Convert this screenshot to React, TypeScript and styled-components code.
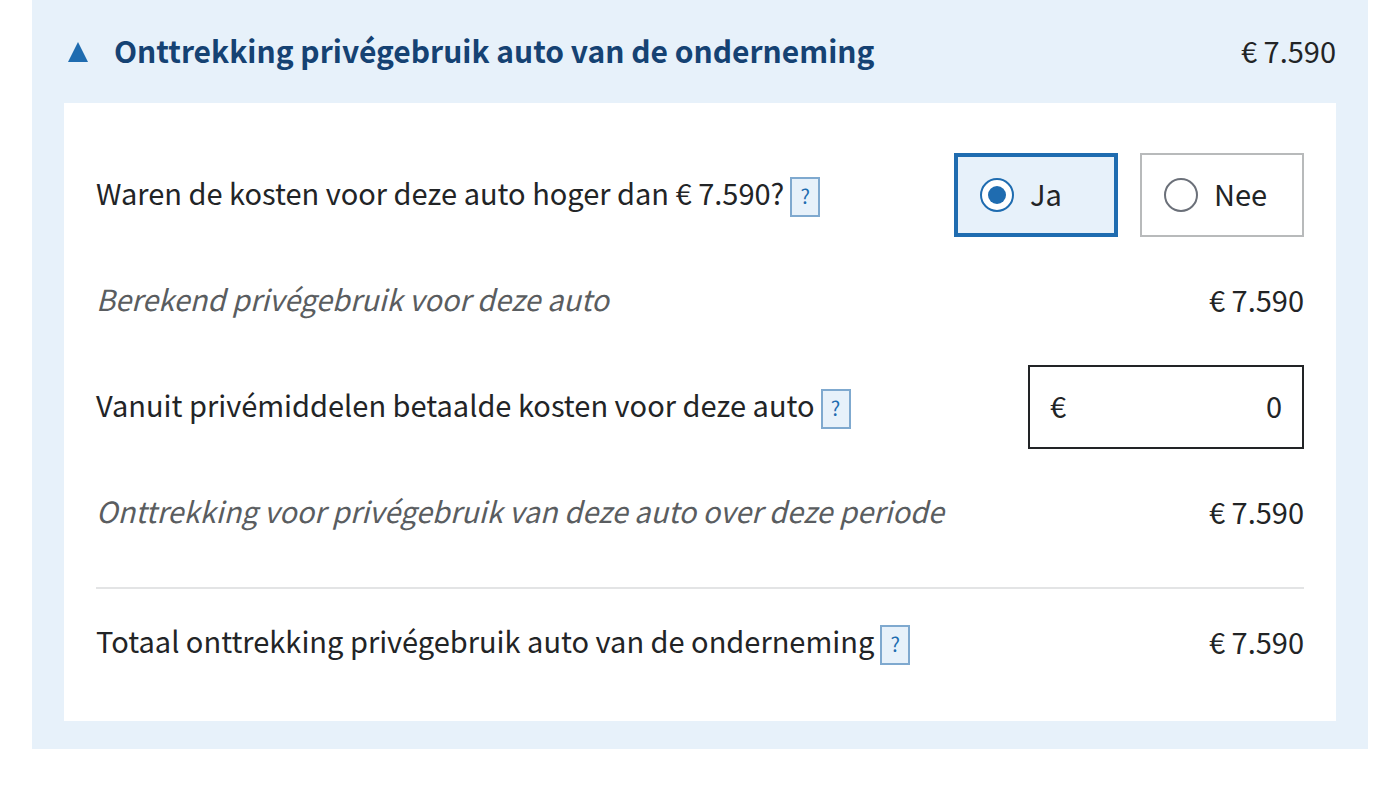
import React, { useState } from "react";
import styled, { createGlobalStyle } from "styled-components";

const GlobalStyle = createGlobalStyle`
  *, *::before, *::after { box-sizing: border-box; }
  body {
    margin: 0;
    background: #fff;
    color: #222426;
    font-family: "Noto Sans CJK SC", "Noto Sans", sans-serif;
    font-size: 29px;
    line-height: 40px;
  }
  button, input { font: inherit; color: inherit; }
`;

const Panel = styled.section`
  margin: 0 32px;
  padding: 0 32px 28px;
  background: #e7f1fa;
`;

const PanelHeader = styled.header`
  display: flex;
  align-items: center;
  justify-content: space-between;
  min-height: 103px;
`;

const Title = styled.h2`
  margin: 0;
  font-size: 30px;
  font-weight: 700;
`;

const ToggleButton = styled.button`
  display: flex;
  align-items: center;
  gap: 26px;
  padding: 0 0 0 4px;
  border: 0;
  background: none;
  color: #154273;
  cursor: pointer;
  text-align: left;
`;

const Caption = styled.span`
  padding-bottom: 4px;
`;

const Card = styled.div`
  padding: 50px 32px 36px;
  background: #fff;
`;

const Rows = styled.div`
  display: flex;
  flex-direction: column;
  gap: 22px;
  padding-bottom: 32px;
`;

const Row = styled.div`
  display: flex;
  align-items: center;
  justify-content: space-between;
  gap: 24px;
  min-height: 84px;
`;

const TotalRow = styled(Row)`
  box-sizing: content-box;
  padding-top: 12px;
  border-top: 2px solid #e3e4e5;
`;

const Question = styled.div`
  display: flex;
  align-items: center;
  gap: 6px;
`;

const Label = styled.label`
  padding-bottom: 6px;
`;

const Computed = styled.span`
  padding-bottom: 6px;
  color: #5a5d60;
  font-style: italic;
`;

const Amount = styled.output`
  padding-bottom: 4px;
  white-space: nowrap;
`;

const HelpButton = styled.button`
  flex: none;
  width: 30px;
  height: 40px;
  margin-top: 4px;
  padding: 0 0 2px;
  border: 2px solid #7fa9cf;
  background: #e7f1fa;
  color: #1f6cb0;
  font-size: 20px;
  line-height: 34px;
  cursor: pointer;
`;

const Options = styled.div`
  display: flex;
  gap: 22px;
`;

const Option = styled.label<{ $selected: boolean }>`
  display: flex;
  align-items: center;
  gap: 16px;
  width: 164px;
  height: 84px;
  padding: 0 22px;
  border: ${(p) => (p.$selected ? "4px solid #1f6cb0" : "2px solid #b8babb")};
  background: ${(p) => (p.$selected ? "#e7f1fa" : "#fff")};
  cursor: pointer;
`;

const Radio = styled.input`
  appearance: none;
  display: grid;
  place-items: center;
  flex: none;
  width: 34px;
  height: 34px;
  margin: 0;
  border: 2px solid #6b7079;
  border-radius: 50%;
  background: #fff;

  &:checked { border-color: #1f6cb0; }
  &:checked::before {
    content: "";
    width: 18px;
    height: 18px;
    border-radius: 50%;
    background: #1f6cb0;
  }
`;

const MoneyField = styled.div`
  display: flex;
  align-items: center;
  width: 276px;
  height: 84px;
  padding: 0 20px 4px;
  border: 2px solid #222426;
  background: #fff;
`;

const MoneyInput = styled.input`
  flex: 1;
  min-width: 0;
  height: 40px;
  padding: 0;
  border: 0;
  outline: 0;
  background: none;
  text-align: right;
`;

function Help() {
  return <HelpButton type="button" aria-label="Toelichting">?</HelpButton>;
}

export default function App() {
  const [open, setOpen] = useState(true);
  const [higher, setHigher] = useState("Ja");
  const [paid, setPaid] = useState("0");

  return (
    <>
      <GlobalStyle />
      <Panel>
        <PanelHeader>
          <Title>
            <ToggleButton type="button" aria-expanded={open} onClick={() => setOpen(!open)}>
              <svg width="20" height="20" viewBox="0 0 20 20" aria-hidden="true">
                <path d={open ? "M10 0 20 20H0Z" : "M0 0H20L10 20Z"} fill="#1f6cb0" />
              </svg>
              <Caption>Onttrekking privégebruik auto van de onderneming</Caption>
            </ToggleButton>
          </Title>
          <Amount>€ 7.590</Amount>
        </PanelHeader>
        {open && (
          <Card>
            <Rows>
              <Row role="radiogroup" aria-labelledby="higher-label">
                <Question>
                  <Label as="span" id="higher-label">
                    Waren de kosten voor deze auto hoger dan € 7.590?
                  </Label>
                  <Help />
                </Question>
                <Options>
                  {["Ja", "Nee"].map((value) => (
                    <Option key={value} $selected={higher === value}>
                      <Radio
                        type="radio"
                        name="higher"
                        value={value}
                        checked={higher === value}
                        onChange={() => setHigher(value)}
                      />
                      <Caption>{value}</Caption>
                    </Option>
                  ))}
                </Options>
              </Row>
              <Row>
                <Computed>Berekend privégebruik voor deze auto</Computed>
                <Amount>€ 7.590</Amount>
              </Row>
              <Row>
                <Question>
                  <Label htmlFor="paid">Vanuit privémiddelen betaalde kosten voor deze auto</Label>
                  <Help />
                </Question>
                <MoneyField>
                  <span>€</span>
                  <MoneyInput
                    id="paid"
                    type="text"
                    inputMode="numeric"
                    value={paid}
                    onChange={(e) => setPaid(e.target.value)}
                  />
                </MoneyField>
              </Row>
              <Row>
                <Computed>Onttrekking voor privégebruik van deze auto over deze periode</Computed>
                <Amount>€ 7.590</Amount>
              </Row>
            </Rows>
            <TotalRow>
              <Question>
                <Label as="span">Totaal onttrekking privégebruik auto van de onderneming</Label>
                <Help />
              </Question>
              <Amount>€ 7.590</Amount>
            </TotalRow>
          </Card>
        )}
      </Panel>
    </>
  );
}
